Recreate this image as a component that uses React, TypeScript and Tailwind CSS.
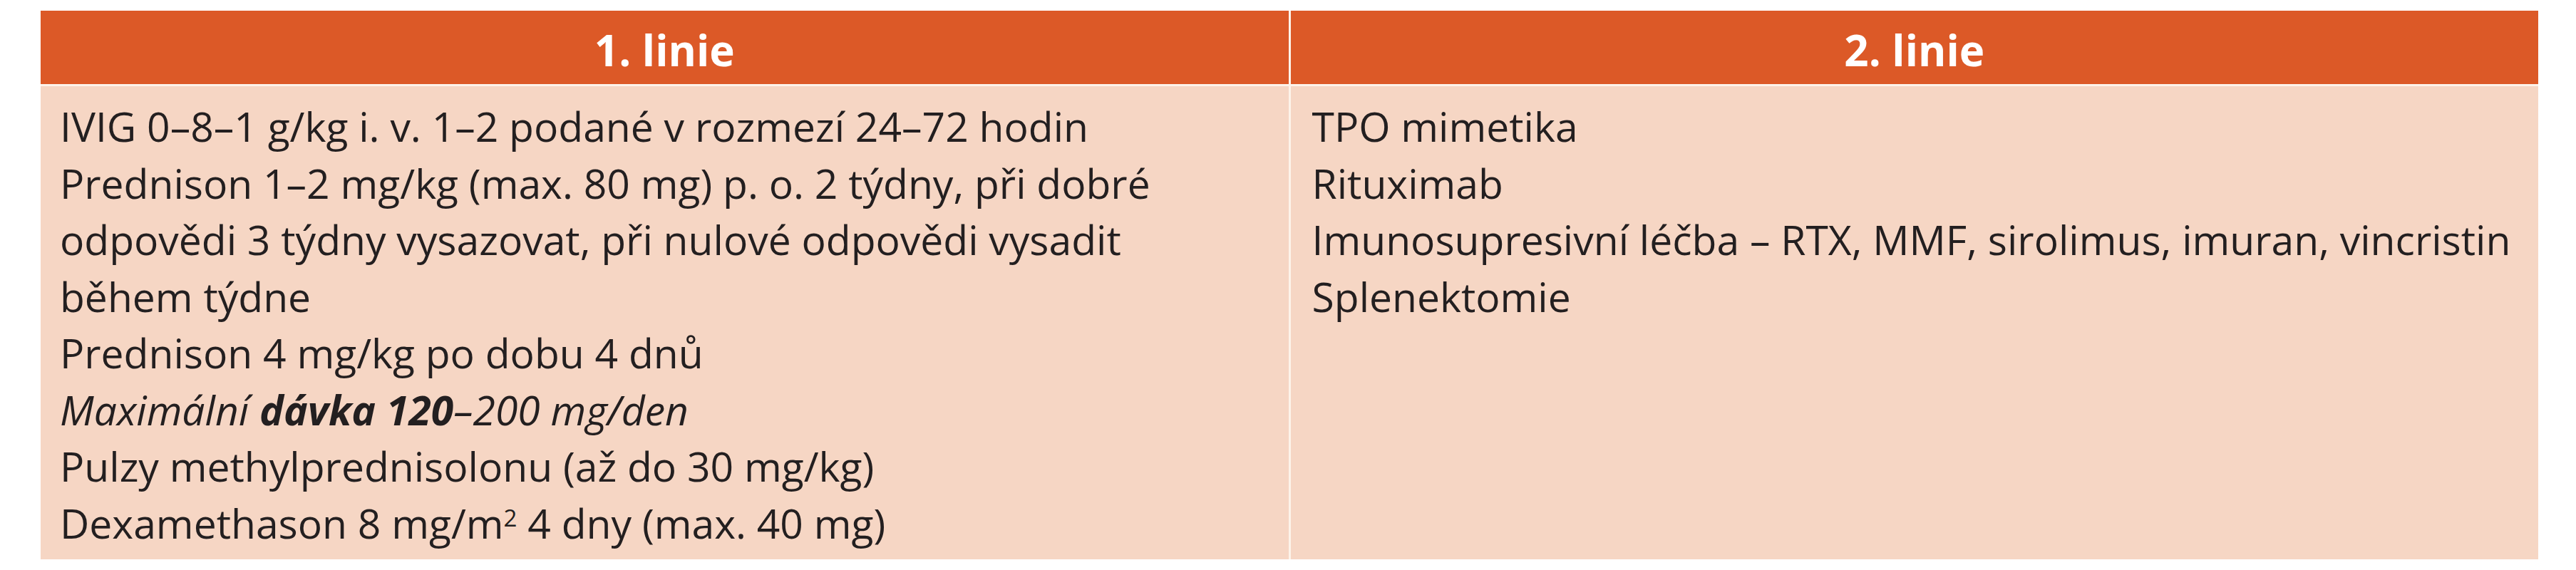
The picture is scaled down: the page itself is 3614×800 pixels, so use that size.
const FIRST_LINE = [
  "IVIG 0–8–1 g/kg i. v. 1–2 podané v rozmezí 24–72 hodin",
  "Prednison 1–2 mg/kg (max. 80 mg) p. o. 2 týdny, při dobré",
  "odpovědi 3 týdny vysazovat, při nulové odpovědi vysadit",
  "během týdne",
  "Prednison 4 mg/kg po dobu 4 dnů",
];

const SECOND_LINE = [
  "TPO mimetika",
  "Rituximab",
  "Imunosupresivní léčba – RTX, MMF, sirolimus, imuran, vincristin",
  "Splenektomie",
];

function HeadCell({ children }: { children: React.ReactNode }) {
  return (
    <div className="flex h-[103px] items-center justify-center bg-[#dc5927] pt-[7px] text-[60px] font-bold leading-none text-white">
      {children}
    </div>
  );
}

export default function App() {
  return (
    <div className="min-h-screen bg-white pt-[15px] pr-[53px] pb-[15px] pl-[57px] font-['Open_Sans',sans-serif]">
      <div className="grid grid-cols-2 gap-[3px] bg-[#fdf3ea]">
        <HeadCell>1. linie</HeadCell>
        <HeadCell>2. linie</HeadCell>

        <div className="h-[664px] whitespace-nowrap bg-[#f6d6c4] px-[27px] pt-[17px] text-[57px] leading-[79.5px] text-[#231f20]">
          {FIRST_LINE.map((line) => (
            <div key={line}>{line}</div>
          ))}
          <div className="italic">
            Maximální <span className="font-bold">dávka 120</span>–200 mg/den
          </div>
          <div>Pulzy methylprednisolonu (až do 30 mg/kg)</div>
          <div>
            Dexamethason 8 mg/m<sup className="text-[58%]">2</sup> 4 dny (max. 40 mg)
          </div>
        </div>

        <div className="h-[664px] whitespace-nowrap bg-[#f6d6c4] px-[30px] pt-[17px] text-[57px] leading-[79.5px] text-[#231f20]">
          {SECOND_LINE.map((line) => (
            <div key={line}>{line}</div>
          ))}
        </div>
      </div>
    </div>
  );
}
